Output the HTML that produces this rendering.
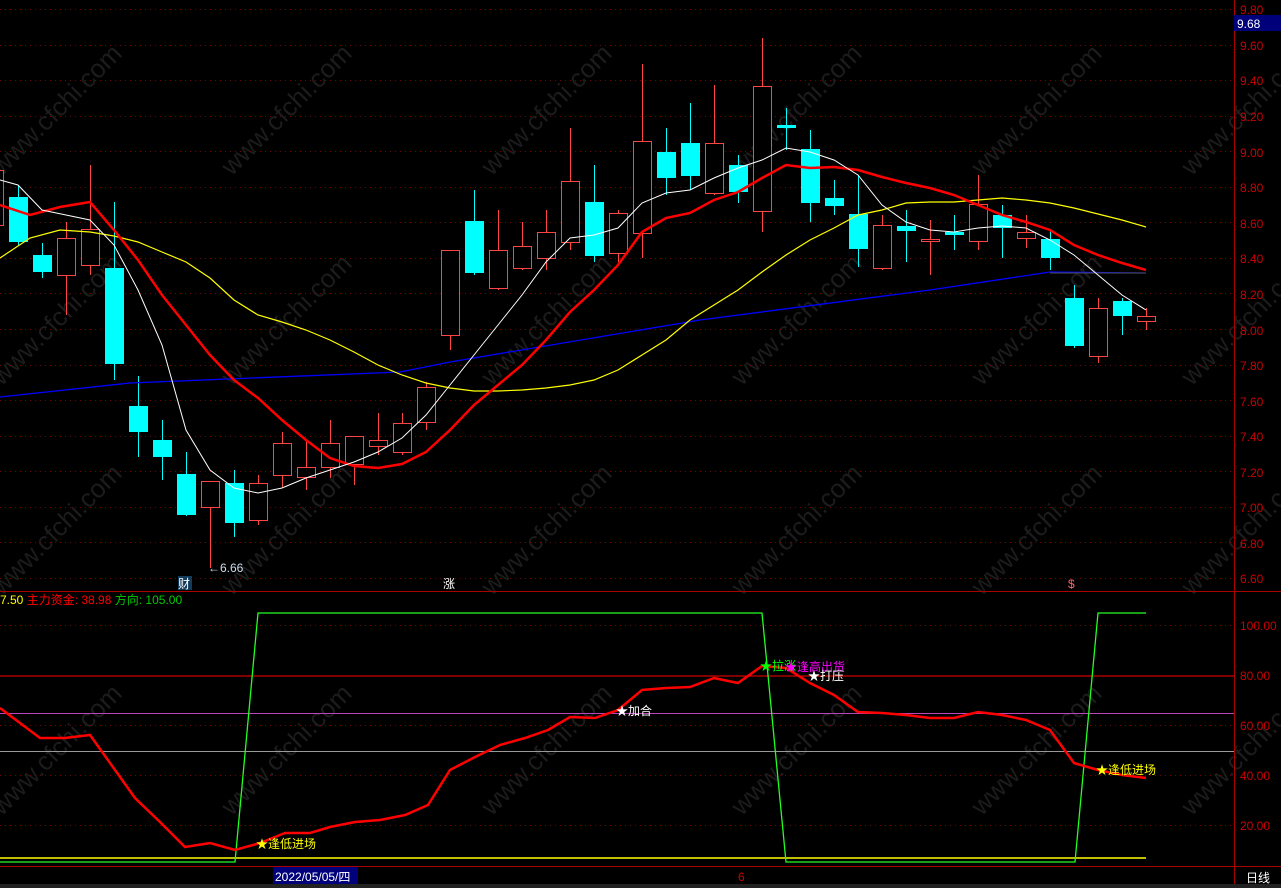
<!DOCTYPE html>
<html><head><meta charset="utf-8"><style>
html,body{margin:0;padding:0;background:#000;overflow:hidden}
svg{display:block;font-family:"Liberation Sans","Noto Sans CJK SC",sans-serif}
</style></head><body>
<svg id="s" width="1281" height="888" viewBox="0 0 1281 888" xmlns="http://www.w3.org/2000/svg">
<rect width="1281" height="888" fill="#000"/>
<g id="wm" fill="#1c1c1c" font-size="26"></g>
<g id="grid"></g>
<g id="candles"></g>
<g id="lines"></g>
<line x1="1234.5" y1="0" x2="1234.5" y2="866" stroke="#a00" stroke-width="1"/>
<line x1="0" y1="591.5" x2="1281" y2="591.5" stroke="#a00"/>
<line x1="0" y1="866.5" x2="1281" y2="866.5" stroke="#a00"/>
<line x1="1234.5" y1="866" x2="1234.5" y2="888" stroke="#a00"/>
<g fill="#c00" font-size="12">
<text x="1240" y="14">9.80</text>
<text x="1240" y="50">9.60</text>
<text x="1240" y="85">9.40</text>
<text x="1240" y="121">9.20</text>
<text x="1240" y="157">9.00</text>
<text x="1240" y="192">8.80</text>
<text x="1240" y="228">8.60</text>
<text x="1240" y="263">8.40</text>
<text x="1240" y="299">8.20</text>
<text x="1240" y="335">8.00</text>
<text x="1240" y="370">7.80</text>
<text x="1240" y="406">7.60</text>
<text x="1240" y="441">7.40</text>
<text x="1240" y="477">7.20</text>
<text x="1240" y="512">7.00</text>
<text x="1240" y="548">6.80</text>
<text x="1240" y="583">6.60</text>
<text x="1240" y="630">100.00</text>
<text x="1240" y="680">80.00</text>
<text x="1240" y="730">60.00</text>
<text x="1240" y="780">40.00</text>
<text x="1240" y="830">20.00</text>
</g>
<rect x="1234" y="15" width="47" height="16" fill="#00007a"/>
<text x="1237" y="28" fill="#fff" font-size="12">9.68</text>
<text x="0" y="604" font-size="12"><tspan fill="#ff0">7.50 </tspan><tspan fill="#f00"> 主力资金: 38.98 </tspan><tspan fill="#0c0"> 方向: 105.00</tspan></text>
<line x1="0" y1="676" x2="1234" y2="676" stroke="#f00"/>
<line x1="0" y1="713.5" x2="1234" y2="713.5" stroke="#b4b" stroke-width="1"/>
<line x1="0" y1="751.5" x2="1234" y2="751.5" stroke="#999" stroke-width="1"/>
<line x1="0" y1="858" x2="1146" y2="858" stroke="#ff0" stroke-width="1.5"/>
<polyline fill="none" stroke="#2f2" stroke-width="1.3" points="0,862 235,862 258,613 762,613 786,862 1075,862 1098,613 1146,613"/>
<polyline fill="none" stroke="#f00" stroke-width="2.5" points="0,708 40,738 65,738 90,735 135,798 160,822 185,847 210,843 235,850 260,843 285,833 310,833 330,827 355,822 380,820 405,815 428,805 450,770 475,757 500,745 525,738 548,730 570,717 595,718 618,710 642,690 666,688 690,687 714,678 738,683 762,666 786,668 810,683 834,695 858,712 882,713 906,715 930,718 954,718 978,712 1002,715 1026,720 1050,730 1074,763 1098,770 1122,775 1146,778"/>
<g font-size="12">
<text x="256" y="848" fill="#ff0">★逢低进场</text>
<text x="616" y="715" fill="#fff">★加合</text>
<text x="760" y="670" fill="#0f0">★拉涨</text>
<text x="785" y="671" fill="#f0f">★逢高出货</text>
<text x="808" y="680" fill="#fff">★打压</text>
<text x="1096" y="774" fill="#ff0">★逢低进场</text>
</g>
<text x="208" y="572" fill="#cde" font-size="12">←6.66</text>
<rect x="178" y="576" width="14" height="14" fill="#123a5a"/>
<text x="178" y="588" fill="#fff" font-size="12">财</text>
<text x="443" y="588" fill="#fff" font-size="12">涨</text>
<text x="1068" y="588" fill="#f66" font-size="12">$</text>
<rect x="273" y="867" width="85" height="18" fill="#00007a"/>
<text x="275" y="881" fill="#fff" font-size="12">2022/05/05/四</text>
<text x="738" y="881" fill="#c00" font-size="12">6</text>
<text x="1246" y="882" fill="#fff" font-size="12">日线</text>
<rect x="0" y="884" width="1281" height="4" fill="#222"/>
</svg>
<script>
var NS="http://www.w3.org/2000/svg";
function el(t,a,p){var e=document.createElementNS(NS,t);for(var k in a)e.setAttribute(k,a[k]);document.getElementById(p).appendChild(e);return e;}
for(var i=0;i<17;i++){var y=Math.round(9+i*35.56)+0.5;el('line',{x1:0,y1:y,x2:1234,y2:y,stroke:'#700','stroke-dasharray':'1,4'},'grid');}
[625,725,775,825].forEach(function(y){el('line',{x1:0,y1:y+.5,x2:1234,y2:y+.5,stroke:'#700','stroke-dasharray':'1,4'},'grid');});
[[30,120],[260,120],[520,120],[770,120],[1010,120],[1220,120],[30,330],[260,330],[520,330],[770,330],[1010,330],[1220,330],[30,540],[260,540],[520,540],[770,540],[1010,540],[1220,540],[30,760],[260,760],[520,760],[770,760],[1010,760],[1220,760]].forEach(function(p){var t=el('text',{x:p[0]-60,y:p[1]+20,transform:'rotate(-45 '+p[0]+' '+p[1]+')'},'wm');t.textContent='www.cfchi.com';});
var C=[[-6,'u',170,225,165,228],[18,'d',197,242,185,245],[42,'d',255,272,243,278],[66,'u',238,275,222,315],[90,'u',229,265,165,275],[114,'d',268,364,202,380],[138,'d',406,432,376,457],[162,'d',440,457,420,480],[186,'d',474,515,452,516],[210,'u',481,507,481,568],[234,'d',483,523,470,537],[258,'u',483,520,475,525],[282,'u',443,475,432,488],[306,'u',467,477,440,490],[330,'u',443,467,420,478],[354,'u',436,464,436,485],[378,'u',440,446,413,455],[402,'u',423,452,413,455],[426,'u',387,422,382,430],[450,'u',250,335,250,350],[474,'d',221,273,190,275],[498,'u',250,288,210,290],[522,'u',246,268,222,270],[546,'u',232,258,210,270],[570,'u',181,242,128,250],[594,'d',202,256,165,262],[618,'u',213,253,210,262],[642,'u',141,233,64,258],[666,'d',152,178,128,195],[690,'d',143,176,103,190],[714,'u',143,193,85,195],[738,'d',165,192,155,203],[762,'u',86,211,38,232],[786,'d',125,128,108,150],[810,'d',149,203,130,222],[834,'d',198,206,180,215],[858,'d',214,249,175,267],[882,'u',225,268,215,270],[906,'d',226,231,210,262],[930,'u',239,241,220,275],[954,'d',232,235,215,250],[978,'u',204,241,175,250],[1002,'d',215,228,205,258],[1026,'u',232,238,215,248],[1050,'d',239,258,230,270],[1074,'d',298,346,285,348],[1098,'u',308,356,298,363],[1122,'d',301,316,298,335],[1146,'u',316,321,308,330]];
C.forEach(function(c){var x=c[0],col=c[1]=='u'?'#f44':'#0ff';
el('line',{x1:x+.5,y1:c[4],x2:x+.5,y2:c[5],stroke:col},'candles');
if(c[1]=='u'){el('rect',{x:x-8.5,y:c[2]+.5,width:18,height:Math.max(1,c[3]-c[2]),fill:'#000',stroke:col},'candles');}
else{el('rect',{x:x-9,y:c[2],width:19,height:Math.max(2,c[3]-c[2]),fill:col},'candles');}
});
function pl(pts,col,w){el('polyline',{points:pts,fill:'none',stroke:col,'stroke-width':w},'lines');}
pl("0,397 130,383 400,372 450,362 700,320 930,290 1050,272 1146,273","#00f",1.3);
pl("1050,273 1146,273","#555",1);
pl("0,258 30,238 60,230 90,232 114,236 138,242 162,252 186,262 210,278 234,300 258,315 282,322 306,330 330,340 354,352 378,365 402,375 426,383 450,388 474,391 498,391 522,390 546,388 570,385 594,380 618,370 642,355 666,340 690,320 714,305 738,290 762,272 786,255 810,240 834,228 858,215 882,210 906,203 930,202 954,202 978,200 1002,198 1026,200 1050,203 1074,208 1098,214 1122,220 1146,227","#ff0",1.2);
pl("0,205 30,215 60,207 90,202 114,230 138,260 162,295 186,325 210,355 234,380 258,398 282,420 306,440 330,458 354,466 378,468 402,464 426,452 450,430 474,405 498,385 522,365 546,340 570,312 594,290 618,265 642,232 666,218 690,213 714,200 738,192 762,178 786,165 810,168 834,167 858,170 882,177 906,183 930,188 954,195 978,205 1002,215 1026,222 1050,230 1074,245 1098,255 1122,263 1146,270","#f00",2.5);
pl("0,180 18,185 42,210 66,215 90,220 114,245 138,290 162,345 186,430 210,470 234,488 258,493 282,488 306,478 330,470 354,462 378,452 402,438 426,415 450,385 474,355 498,325 522,295 546,262 570,238 594,235 618,228 642,203 666,193 690,190 714,178 738,168 762,160 786,148 810,152 834,160 858,175 882,205 906,222 930,230 954,232 978,228 1002,226 1026,228 1050,240 1074,255 1098,275 1122,295 1146,310","#fff",1);
</script>
</body></html>
